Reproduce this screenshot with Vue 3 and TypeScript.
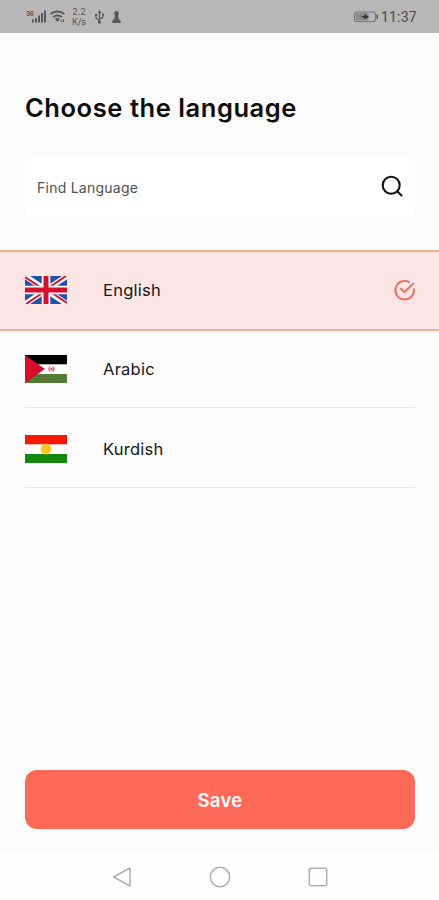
<script setup lang="ts">
import { ref } from 'vue'

interface Language {
  id: string
  name: string
}

const languages: Language[] = [
  { id: 'en', name: 'English' },
  { id: 'ar', name: 'Arabic' },
  { id: 'ku', name: 'Kurdish' },
]

const selected = ref<string>('en')
const query = ref<string>('')
</script>

<template>
  <div class="screen">
    <header class="status">
      <svg class="status-icons" width="130" height="33" viewBox="0 0 130 33">
        <g class="ink">
          <text class="net" x="26" y="16">36</text>
          <path d="M32 19.500h2v3h-2zM35 18h2v4.500h-2zM38 15.500h2v7h-2zM41 13h2v9.500h-2zM44 10.500h2v12h-2z" />
          <path class="line" d="M50.500 14q7-5 14 0M53 17q4.500-3 9 0" />
          <path d="M55 19q2.500-2 5 0l-2.500 3z" />
          <path class="thin" d="M60.500 20l1.500 2M63.500 19v3" />
          <text class="speed" x="79" y="14.500">2.2</text>
          <text class="speed" x="79" y="25">K/s</text>
          <path class="thin" d="M99.500 12v10M96 15v2.500q0 1.500 3.500 2.500M103 14.500v2q0 1.500-3.500 2.500" />
          <path d="M97.500 13l2-3 2 3zM95 14h2.200v2H95zM102 13.500h2v2h-2zM98 21h3v2.500h-3z" />
          <circle cx="116.500" cy="13.200" r="2.300" />
          <path d="M115 14h3l.7 5 2 1.500v2.500h-8.400v-2.500l2-1.500z" />
        </g>
      </svg>
      <div class="status-right">
        <svg width="26" height="14" viewBox="0 0 26 14">
          <rect x="1.500" y="2" width="21" height="9.500" rx="2.500" fill="none" stroke="#777" stroke-width="1.200" />
          <rect x="2.500" y="3" width="13" height="7.500" rx="1.500" fill="#8d8d8d" />
          <path d="M7.500 6.800l4-1V4l4.500 2.800-4.500 2.800V7.800z" fill="#333" />
          <path d="M24.200 4.500v4.500" stroke="#666" stroke-width="1.600" />
        </svg>
        <span class="clock">11:37</span>
      </div>
    </header>

    <main class="content">
      <h1 class="title">Choose the language</h1>

      <label class="search">
        <input v-model="query" class="search-input" type="text" placeholder="Find Language" />
        <svg width="24" height="24" viewBox="0 0 24 24" fill="none" stroke="#111" stroke-width="2.100" stroke-linecap="round">
          <circle cx="11.200" cy="10.200" r="8.500" />
          <path d="M17.400 16.500l4.100 4" />
        </svg>
      </label>

      <ul class="list">
        <li
          v-for="lang in languages"
          :key="lang.id"
          class="item"
          :class="{ active: selected === lang.id }"
          @click="selected = lang.id"
        >
          <div class="row">
            <svg v-if="lang.id === 'en'" class="flag" viewBox="0 0 42 28" preserveAspectRatio="none">
              <rect width="42" height="28" fill="#2450a8" />
              <path d="M0 0l42 28M42 0L0 28" stroke="#fff" stroke-width="5.600" />
              <path d="M0 1l18 12M42 27L24 15M41 0L24 11.500M1 28l17-11.500" stroke="#d80f2c" stroke-width="2" />
              <path d="M21 0v28M0 14h42" stroke="#fff" stroke-width="8.600" />
              <path d="M21 0v28M0 14h42" stroke="#d80f2c" stroke-width="5" />
            </svg>
            <svg v-else-if="lang.id === 'ar'" class="flag" viewBox="0 0 42 28" preserveAspectRatio="none">
              <rect width="42" height="28" fill="#fff" />
              <rect width="42" height="9.300" fill="#000" />
              <rect y="19" width="42" height="9" fill="#557a35" />
              <path d="M0 0l20 14L0 28z" fill="#d80c2c" />
              <path d="M25.500 11.300a3.200 3.200 0 0 0 0 5.600" fill="none" stroke="#d94358" stroke-width="1" />
              <path d="M26.500 12.300l.6 1.300h1.300l-1 .9.400 1.400-1.300-.8-1.200.8.400-1.400-1-.9h1.300zM27 11a3.200 3.200 0 0 1 0 6.300a5 5 0 0 0 0-6.300z" fill="#d94358" />
            </svg>
            <svg v-else class="flag" viewBox="0 0 42 28" preserveAspectRatio="none">
              <rect width="42" height="28" fill="#fff" />
              <rect width="42" height="9.300" fill="#fb1708" />
              <rect y="19" width="42" height="9" fill="#15880f" />
              <circle cx="21" cy="14" r="5" fill="#fac51b" />
              <circle cx="21" cy="14" r="5.200" fill="none" stroke="#fac51b" stroke-width="1" stroke-dasharray=".8 .8" />
            </svg>
            <span class="name">{{ lang.name }}</span>
            <svg
              v-if="selected === lang.id"
              class="check"
              width="24"
              height="24"
              viewBox="0 0 24 24"
              fill="none"
              stroke="#ec695c"
              stroke-width="1.900"
              stroke-linecap="round"
              stroke-linejoin="round"
            >
              <path d="M21.900 11.200A9.300 9.300 0 1 1 17 4" />
              <path d="M9 10.800l3.500 3.300 8.700-8.500" />
            </svg>
          </div>
        </li>
      </ul>

      <button class="save" type="button">Save</button>
    </main>

    <nav class="navbar">
      <svg width="24" height="24" viewBox="0 0 24 24"><path d="M3.500 12L20 3v18z" /></svg>
      <svg width="24" height="24" viewBox="0 0 24 24"><circle cx="12" cy="12" r="9.700" /></svg>
      <svg width="24" height="24" viewBox="0 0 24 24"><rect x="3.300" y="3.300" width="17.400" height="17.400" rx="2" /></svg>
    </nav>
  </div>
</template>

<style>
body {
  margin: 0;
  background: #fefefe;
}
</style>

<style scoped>
.screen {
  display: flex;
  flex-direction: column;
  width: 100%;
  height: 900px;
  background: #fbfbfb;
  color: #171717;
  font-family: Inter, Roboto, "Liberation Sans", sans-serif;
}
.status {
  display: flex;
  justify-content: space-between;
  align-items: center;
  height: 33px;
  padding-right: 22px;
  background: #b7b7b7;
}
.status-icons {
  display: block;
}
.ink {
  fill: #585858;
}
.line,
.thin {
  fill: none;
  stroke: #585858;
  stroke-width: 1.8;
}
.thin {
  stroke-width: 1.2;
}
.net {
  font-size: 6px;
  font-weight: 700;
}
.speed {
  font-size: 9px;
  text-anchor: middle;
}
.status-right {
  display: flex;
  align-items: center;
  gap: 2px;
}
.clock {
  font-family: Roboto, sans-serif;
  font-size: 14px;
  line-height: 16px;
  letter-spacing: 0.25px;
  color: #484848;
}
.content {
  flex: 1;
  display: flex;
  flex-direction: column;
}
.title {
  margin: 59px 25px 0;
  font-size: 25.5px;
  line-height: 32px;
  font-weight: 600;
  letter-spacing: 0.56px;
  white-space: nowrap;
  color: #0d0d0d;
}
.search {
  display: flex;
  align-items: center;
  height: 58px;
  margin: 34px 24px 0 25px;
  padding: 0 11px 0 12px;
  box-sizing: border-box;
  border-radius: 4px;
  background: #fff;
}
.search-input {
  flex: 1;
  min-width: 0;
  padding: 0;
  border: 0;
  outline: 0;
  background: transparent;
  color: #222;
  font: inherit;
  font-size: 14px;
  letter-spacing: 0.25px;
}
.search-input::placeholder {
  color: #505050;
  opacity: 1;
}
.list {
  margin: 34px 0 0;
  padding: 0;
  list-style: none;
}
.item {
  padding: 0 24px 0 25px;
}
.row {
  display: flex;
  align-items: center;
  box-sizing: border-box;
  height: 80px;
  padding-top: 2px;
  border-bottom: 1px solid #e5e5e5;
}
.item.active {
  border-top: 2px solid #e9b09a;
  border-bottom: 2px solid #e9b09a;
  background: #fbe6e3;
}
.item.active .row {
  height: 77px;
  padding: 0 0 1px;
  border-bottom: 0;
}
.item.active + .item .row {
  height: 77px;
  padding-top: 0;
}
.flag {
  width: 42px;
  height: 28px;
  margin-right: 36px;
}
.name {
  flex: 1;
  font-size: 16.5px;
  line-height: 24px;
  letter-spacing: 0.25px;
}
.check {
  margin-right: -1px;
}
.save {
  height: 59px;
  margin: auto 24px 21px 25px;
  padding: 0;
  border: 0;
  border-radius: 12px;
  background: #ff6957;
  color: #fff;
  font: inherit;
  font-size: 18.5px;
  font-weight: 600;
  letter-spacing: 0.35px;
}
.navbar {
  display: flex;
  justify-content: center;
  align-items: center;
  box-sizing: border-box;
  gap: 74px;
  height: 50px;
  padding-top: 3px;
  background: #fefefe;
}
.navbar svg {
  fill: none;
  stroke: #b0b0b0;
  stroke-width: 1.5;
  stroke-linejoin: round;
}
</style>
